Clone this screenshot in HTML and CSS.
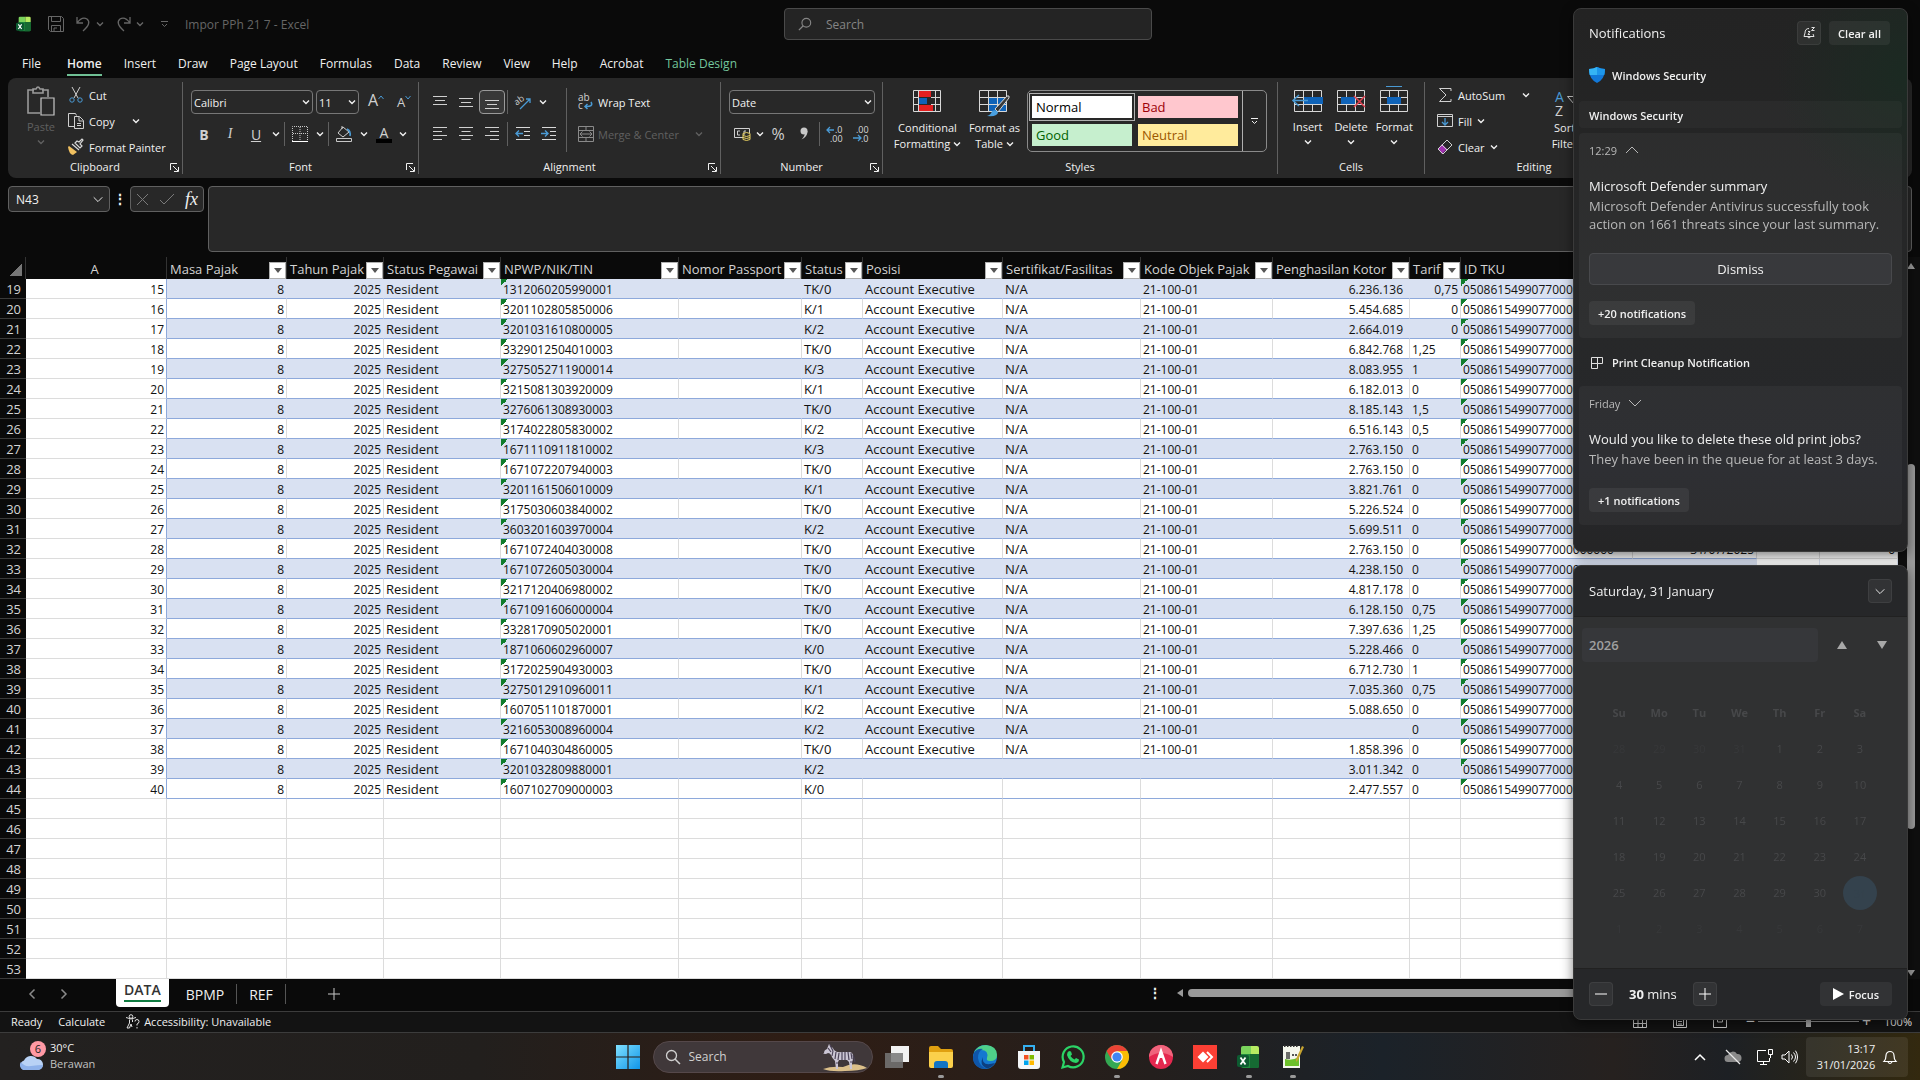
FILE: index.html
```html
<!DOCTYPE html>
<html lang="id">
<head>
  <meta charset="UTF-8">
  <title>Impor PPh 21 7 - Excel</title>
  <link rel="stylesheet" href="styles.css">
</head>
<body>
  <!-- Iconos compartidos -->
  <svg width="0" height="0" class="sprite" aria-hidden="true">
    <symbol id="caret" viewBox="0 0 8 8"><path d="M1 2.5l3 3 3-3" fill="none" stroke="currentColor" stroke-width="1.4"/></symbol>
    <symbol id="chevron" viewBox="0 0 14 14"><path d="M2 5l5 5 5-5" fill="none" stroke="currentColor" stroke-width="1.1"/></symbol>
    <symbol id="launcher" viewBox="0 0 9 9"><path d="M.5 7V.5H7M3 3l5 5M8.5 4v4.5H4" fill="none" stroke="currentColor"/></symbol>
    <symbol id="search" viewBox="0 0 16 16"><circle cx="9.5" cy="6.5" r="5" fill="none" stroke="currentColor" stroke-width="1.3"/><path d="M6 10l-5 5" stroke="currentColor" stroke-width="1.5"/></symbol>
    <symbol id="excel" viewBox="0 0 24 24">
      <path d="M6 1h8v9H4V3q0-2 2-2z" fill="#7ad35c"/><path d="M14 1h6q2 0 2 2v6h-8z" fill="#b7ec62"/>
      <path d="M4 9h18v12q0 2-2 2H6q-2 0-2-2z" fill="#1f8b3d"/><path d="M13 9h9v12q0 2-2 2h-7z" fill="#166a33"/>
      <rect x="0" y="10" width="12" height="12" rx="2" fill="#0d5b31"/><path d="M3.5 12.5l5 7M8.5 12.5l-5 7" stroke="#fff" stroke-width="1.8"/>
    </symbol>
    <symbol id="bars-top" viewBox="0 0 16 16"><path d="M1 2.5h14M3 6.5h10M1 10.5h14" stroke="currentColor"/></symbol>
    <symbol id="bars-mid" viewBox="0 0 16 16"><path d="M1 4.5h14M3 8.5h10M1 12.5h14" stroke="currentColor"/></symbol>
    <symbol id="bars-bot" viewBox="0 0 16 16"><path d="M1 6.5h14M3 10.5h10M1 14.5h14" stroke="currentColor"/></symbol>
    <symbol id="al-left" viewBox="0 0 16 16"><path d="M1 1.5h14M1 5.5h9M1 9.5h14M1 13.5h9" stroke="currentColor"/></symbol>
    <symbol id="al-center" viewBox="0 0 16 16"><path d="M1 1.5h14M3.5 5.5h9M1 9.5h14M3.5 13.5h9" stroke="currentColor"/></symbol>
    <symbol id="al-right" viewBox="0 0 16 16"><path d="M1 1.5h14M6 5.5h9M1 9.5h14M6 13.5h9" stroke="currentColor"/></symbol>
    <symbol id="grid-sheet" viewBox="0 0 28 22"><path d="M.5.5h27v21H.5zM.5 7.5h27M.5 14.5h27M9.5 0v22M18.5 0v22" fill="none" stroke="#d8d8d8"/></symbol>
  </svg>

  <div class="app">
    <header class="titlebar">
      <div class="quick">
        <svg width="16" height="16"><use href="#excel"/></svg>
        <button aria-label="Save"><svg width="16" height="16" viewBox="0 0 16 16" fill="none" stroke="currentColor"><path d="M.5.5h13l2 2v13H2.500l-2-2zM3.500.5v5h9v-5M3.500 15.500v-6h9v6M6 15v-3h3"/></svg></button>
        <button aria-label="Undo"><svg width="16" height="16" viewBox="0 0 16 16" fill="none" stroke="currentColor" stroke-width="1.3"><path d="M1 1v6h6M1 7q5-7 10-4 5 4-4 12"/></svg><svg width="8" height="8"><use href="#caret"/></svg></button>
        <button aria-label="Redo"><svg width="16" height="16" viewBox="0 0 16 16" fill="none" stroke="currentColor" stroke-width="1.3"><path d="M14 1v6H8M14 7Q9 0 4 3q-5 4 4 12"/></svg><svg width="8" height="8"><use href="#caret"/></svg></button>
        <button class="customize" aria-label="Customize"><svg width="9" height="8" viewBox="0 0 9 8" fill="none" stroke="currentColor"><path d="M1 1.500h7M2 4l2.500 2.500L7 4"/></svg></button>
        <span class="doc-name">Impor PPh 21 7 - Excel</span>
      </div>
      <label class="title-search">
        <svg width="14" height="14"><use href="#search"/></svg>
        <input type="text" placeholder="Search" aria-label="Search">
      </label>
    </header>

    <nav class="tabs">
      <a href="#" class="file">File</a>
      <a href="#" class="active">Home</a>
      <a href="#">Insert</a>
      <a href="#">Draw</a>
      <a href="#">Page Layout</a>
      <a href="#">Formulas</a>
      <a href="#">Data</a>
      <a href="#">Review</a>
      <a href="#">View</a>
      <a href="#">Help</a>
      <a href="#">Acrobat</a>
      <a href="#" class="context">Table Design</a>
    </nav>

    <section class="ribbon">
      <div class="group clipboard">
        <div class="group-body">
          <button class="big disabled">
            <svg width="28" height="30" viewBox="0 0 28 30" fill="none" stroke="#9a9a9a" stroke-width="1.6"><path d="M13 27H1V4h6M15 4h6v7M6 7V3h3q2-4 4 0h3v4z"/><path d="M14 12h13v17H14z" stroke="#c8c8c8" stroke-width="1.2"/></svg>
            <span>Paste</span>
            <svg width="8" height="8"><use href="#caret"/></svg>
          </button>
          <div class="stack">
            <button><svg width="16" height="16" viewBox="0 0 16 16" fill="none"><path d="M4 0l6 11M12 0L6 11" stroke="#d0d0d0"/><circle cx="4" cy="13" r="2.2" stroke="#4a9ad4"/><circle cx="12" cy="13" r="2.2" stroke="#4a9ad4"/></svg>Cut</button>
            <button><svg width="16" height="16" viewBox="0 0 16 16" fill="none" stroke="#d0d0d0"><path d="M6 13.500H.5V.5h7l1 2M6.500 3.500h5l4 4v8h-9zM11 4v4h4M9 10.500h4M9 12.500h4"/></svg>Copy<svg class="far" width="8" height="8"><use href="#caret"/></svg></button>
            <button><svg width="16" height="16" viewBox="0 0 16 16"><path d="M1 7l8 6-4 3q-4-1-5-8z" fill="#f0c060"/><path d="M4 5l7 6M7 4l5 5 2-2-2-2 3-4-1-1-3 3-2-1z" fill="none" stroke="#d8d8d8" stroke-width="1.2"/></svg>Format Painter</button>
          </div>
        </div>
        <div class="group-label">Clipboard<svg width="9" height="9"><use href="#launcher"/></svg></div>
      </div>

      <div class="group font">
        <div class="group-body rows">
          <div class="row">
            <span class="combo font-name"><select aria-label="Font"><option>Calibri</option></select><svg width="8" height="8"><use href="#caret"/></svg></span>
            <span class="combo font-size"><select aria-label="Font size"><option>11</option></select><svg width="8" height="8"><use href="#caret"/></svg></span>
            <button class="tool grow" aria-label="Increase font size"><span>A</span><svg width="6" height="5" viewBox="0 0 6 5"><path d="M.5 4L3 1l2.500 3" fill="none" stroke="#4a9ad4"/></svg></button>
            <button class="tool shrink" aria-label="Decrease font size"><span>A</span><svg width="6" height="5" viewBox="0 0 6 5"><path d="M.5 1L3 4l2.500-3" fill="none" stroke="#4a9ad4"/></svg></button>
          </div>
          <div class="row">
            <button class="tool bold">B</button>
            <button class="tool italic">I</button>
            <button class="tool under">U</button>
            <button class="drop" aria-label="Underline style"><svg width="8" height="8"><use href="#caret"/></svg></button>
            <i class="sep"></i>
            <button class="tool" aria-label="Borders"><svg width="16" height="16" viewBox="0 0 16 16" fill="none" stroke="#c8c8c8"><path d="M.5 15V.5h15V15M8 1v14M1 7.500h14" stroke-dasharray="1 1"/><path d="M0 15.500h16" stroke="#fff"/></svg></button>
            <button class="drop" aria-label="Border style"><svg width="8" height="8"><use href="#caret"/></svg></button>
            <i class="sep"></i>
            <button class="tool" aria-label="Fill color"><svg width="16" height="16" viewBox="0 0 16 16" fill="none"><path d="M7 1L2 7l5 4 6-5zM6 3V0" stroke="#d0d0d0"/><path d="M11 3q4 2 3 7" stroke="#4a9ad4" stroke-width="1.6"/><path d="M.5 12.500h15v3H.5z" stroke="#c8c8c8"/></svg></button>
            <button class="drop" aria-label="Fill colors"><svg width="8" height="8"><use href="#caret"/></svg></button>
            <button class="tool color">A</button>
            <button class="drop" aria-label="Font colors"><svg width="8" height="8"><use href="#caret"/></svg></button>
          </div>
        </div>
        <div class="group-label">Font<svg width="9" height="9"><use href="#launcher"/></svg></div>
      </div>

      <div class="group alignment">
        <div class="group-body">
          <div class="rows">
            <div class="row">
              <button class="tool" aria-label="Top align"><svg width="16" height="16"><use href="#bars-top"/></svg></button>
              <button class="tool" aria-label="Middle align"><svg width="16" height="16"><use href="#bars-mid"/></svg></button>
              <button class="tool pressed" aria-label="Bottom align"><svg width="16" height="16"><use href="#bars-bot"/></svg></button>
              <i class="sep"></i>
              <button class="tool" aria-label="Orientation"><svg width="16" height="16" viewBox="0 0 16 16"><text x="0" y="9" font-size="9" fill="#d0d0d0" transform="rotate(-35 5 8)">ab</text><path d="M5 15L15 5M11 5h4v4" fill="none" stroke="#4a9ad4" stroke-width="1.3"/></svg></button>
              <button class="drop" aria-label="Orientation options"><svg width="8" height="8"><use href="#caret"/></svg></button>
            </div>
            <div class="row">
              <button class="tool" aria-label="Align left"><svg width="16" height="16"><use href="#al-left"/></svg></button>
              <button class="tool" aria-label="Center"><svg width="16" height="16"><use href="#al-center"/></svg></button>
              <button class="tool" aria-label="Align right"><svg width="16" height="16"><use href="#al-right"/></svg></button>
              <i class="sep"></i>
              <button class="tool" aria-label="Decrease indent"><svg width="16" height="16" viewBox="0 0 16 16" fill="none"><path d="M1 1.500h14M9 5.500h6M9 9.500h6M1 13.500h14" stroke="#d8d8d8"/><path d="M8 7.500H1M4 4.500l-3 3 3 3" stroke="#4a9ad4" stroke-width="1.4"/></svg></button>
              <button class="tool" aria-label="Increase indent"><svg width="16" height="16" viewBox="0 0 16 16" fill="none"><path d="M1 1.500h14M9 5.500h6M9 9.500h6M1 13.500h14" stroke="#d8d8d8"/><path d="M0 7.500h7M4 4.500l3 3-3 3" stroke="#4a9ad4" stroke-width="1.4"/></svg></button>
            </div>
          </div>
          <i class="sep tall"></i>
          <div class="rows wrap">
            <button><svg width="16" height="16" viewBox="0 0 16 16"><text x="0" y="7" font-size="10" fill="#d0d0d0">ab</text><text x="0" y="15" font-size="10" fill="#d0d0d0">c</text><path d="M13 8q3 5-6 4.500M9.500 10L7 12.500l2.500 2.500" fill="none" stroke="#4a9ad4" stroke-width="1.5"/></svg>Wrap Text</button>
            <button class="disabled"><svg width="16" height="16" viewBox="0 0 16 16" fill="none" stroke="#8a8a8a"><path d="M.5.5h15v15H.5zM.5 4.500h15M.5 11.500h15M8 0v4M8 12v4M2 8h12M4.500 5.500L2 8l2.500 2.500M11.500 5.500L14 8l-2.500 2.500"/></svg>Merge &amp; Center<svg class="far" width="8" height="8"><use href="#caret"/></svg></button>
          </div>
        </div>
        <div class="group-label">Alignment<svg width="9" height="9"><use href="#launcher"/></svg></div>
      </div>

      <div class="group number">
        <div class="group-body rows">
          <div class="row">
            <span class="combo number-format"><select aria-label="Number format"><option>Date</option></select><svg width="8" height="8"><use href="#caret"/></svg></span>
          </div>
          <div class="row">
            <button class="tool" aria-label="Accounting format"><svg width="17" height="16" viewBox="0 0 17 16" fill="none"><path d="M9 11.500H.5v-9h15V7M6 5H3.500v4H6M10 9V5h2" stroke="#d0d0d0"/><path d="M9 7.500q3.500-2 7 0v6q-3.500 2-7 0zM9 9.500q3.500 2 7 0M9 11.500q3.500 2 7 0" stroke="#e8d060"/></svg></button>
            <button class="drop" aria-label="Currencies"><svg width="8" height="8"><use href="#caret"/></svg></button>
            <button class="tool percent">%</button>
            <button class="tool" aria-label="Comma style"><svg width="10" height="14" viewBox="0 0 10 14"><circle cx="5" cy="4" r="3.5" fill="#c8c8c8"/><path d="M8.500 4q0 6-6 8.500Q6 9 6 5z" fill="#c8c8c8"/></svg></button>
            <i class="sep"></i>
            <button class="tool" aria-label="Increase decimal"><svg width="16" height="16" viewBox="0 0 16 16"><path d="M7 4H0M3 1L0 4l3 3" fill="none" stroke="#4a9ad4" stroke-width="1.3"/><text x="8" y="7" font-size="9" fill="#d8d8d8">.0</text><text x="3" y="16" font-size="9" fill="#d8d8d8">.00</text></svg></button>
            <button class="tool" aria-label="Decrease decimal"><svg width="16" height="16" viewBox="0 0 16 16"><path d="M0 12h8M5 9l3 3-3 3" fill="none" stroke="#4a9ad4" stroke-width="1.3"/><text x="3" y="7" font-size="9" fill="#d8d8d8">.00</text><text x="8" y="16" font-size="9" fill="#d8d8d8">.0</text></svg></button>
          </div>
        </div>
        <div class="group-label">Number<svg width="9" height="9"><use href="#launcher"/></svg></div>
      </div>

      <div class="group styles">
        <div class="group-body">
          <button class="big two">
            <svg width="28" height="27" viewBox="0 0 28 27"><path d="M6 0h12v7H6zM6 15h14v7H6z" fill="#e32020"/><path d="M6 8h8v6H6z" fill="#0f63b8"/><path d="M.5.5h27v21H.5zM.5 7.500h5M.5 14.500h5M18 7.500h10M18 14.500h10M5.500 0v22M22.500 0v22" fill="none" stroke="#d8d8d8"/></svg>
            <span>Conditional<br>Formatting <svg width="8" height="8"><use href="#caret"/></svg></span>
          </button>
          <button class="big two">
            <svg width="31" height="27" viewBox="0 0 31 27"><path d="M10 7h18v15H10z" fill="#0f63b8"/><path d="M.5.5h27v21H.5zM.5 7.500h27M.5 14.500h27M9.500 0v22M18.500 0v22" fill="none" stroke="#d8d8d8"/><path d="M16 19L28 6q3-1 2 2L19 22z" fill="#3a3a3a" stroke="#d8d8d8"/><path d="M8 26q4-1 5-5 4-2 6 1 0 5-11 4z" fill="#4aa0e0"/></svg>
            <span>Format as<br>Table <svg width="8" height="8"><use href="#caret"/></svg></span>
          </button>
          <div class="gallery">
            <div class="swatches">
              <button class="normal">Normal</button>
              <button class="bad">Bad</button>
              <button class="good">Good</button>
              <button class="neutral">Neutral</button>
            </div>
            <button class="more" aria-label="More styles"><svg width="9" height="8" viewBox="0 0 9 8" fill="none" stroke="currentColor"><path d="M1 1.500h7M2 4l2.500 2.500L7 4"/></svg></button>
          </div>
        </div>
        <div class="group-label">Styles</div>
      </div>

      <div class="group cells">
        <div class="group-body">
          <button class="big"><svg width="32" height="30" viewBox="0 0 32 30"><g transform="translate(2 4)"><use href="#grid-sheet" width="28" height="22"/></g><path d="M12 11h19v7H12z" fill="#0f63b8"/><path d="M16 14.500H1M7 9l-6 5.500L7 20" fill="none" stroke="#4a9ad4" stroke-width="1.5"/></svg><span>Insert</span><svg width="8" height="8"><use href="#caret"/></svg></button>
          <button class="big"><svg width="32" height="30" viewBox="0 0 32 30"><g transform="translate(2 4)"><use href="#grid-sheet" width="28" height="22"/></g><path d="M6 11h14v7H6z" fill="#0f63b8"/><path d="M19 10l11 11M30 10L19 21" stroke="#e04050" stroke-width="1.5"/></svg><span>Delete</span><svg width="8" height="8"><use href="#caret"/></svg></button>
          <button class="big"><svg width="32" height="30" viewBox="0 0 32 30"><g transform="translate(2 4)"><use href="#grid-sheet" width="28" height="22"/></g><path d="M9 11h14v7H9z" fill="#0f63b8"/><path d="M8 .5h16" stroke="#4a9ad4"/></svg><span>Format</span><svg width="8" height="8"><use href="#caret"/></svg></button>
        </div>
        <div class="group-label">Cells</div>
      </div>

      <div class="group editing">
        <div class="group-body">
          <div class="stack">
            <button><svg width="16" height="16" viewBox="0 0 16 16" fill="none" stroke="#d0d0d0"><path d="M14 4V1.500H2.500L9 8l-6.500 6.500H14V12"/></svg>AutoSum<svg class="far" width="8" height="8"><use href="#caret"/></svg></button>
            <button><svg width="16" height="16" viewBox="0 0 16 16" fill="none"><path d="M.5 1.500h15v12H.5zM.5 3.500h15" stroke="#d0d0d0"/><path d="M8 5v7M5 9l3 3 3-3" stroke="#4a9ad4" stroke-width="1.3"/></svg>Fill<svg width="8" height="8"><use href="#caret"/></svg></button>
            <button><svg width="16" height="16" viewBox="0 0 16 16"><path d="M1 10l4-5 5 5-5 5z" fill="#a030b0"/><path d="M1 10l9-9 5 5-9 9zM5 6l5 5" fill="none" stroke="#d0d0d0"/></svg>Clear<svg width="8" height="8"><use href="#caret"/></svg></button>
          </div>
          <button class="big two">
            <svg width="32" height="27" viewBox="0 0 32 27"><text x="1" y="12" font-size="14" fill="#4a9ad4">A</text><text x="1" y="26" font-size="14" fill="#d0d0d0">Z</text><path d="M13.500 6.500h17l-7 8v7h-3v-7z" fill="none" stroke="#d0d0d0"/></svg>
            <span>Sort &amp;<br>Filter <svg width="8" height="8"><use href="#caret"/></svg></span>
          </button>
        </div>
        <div class="group-label">Editing</div>
      </div>
    </section>

    <section class="formula-row">
      <label class="name-box"><input type="text" value="N43" aria-label="Name box"><svg width="12" height="12"><use href="#chevron"/></svg></label>
      <span class="grip">⋮</span>
      <div class="fx">
        <button aria-label="Cancel"><svg width="13" height="13" viewBox="0 0 13 13"><path d="M1 1l11 11M12 1L1 12" stroke="#7a7a7a"/></svg></button>
        <button aria-label="Enter"><svg width="16" height="13" viewBox="0 0 16 13"><path d="M1 7l4 4L15 1" fill="none" stroke="#7a7a7a"/></svg></button>
        <button class="fn">fx</button>
      </div>
      <textarea class="formula" aria-label="Formula"></textarea>
    </section>

    <main class="sheet">
      <table>
        <colgroup id="cols"></colgroup>
        <thead><tr id="head"></tr></thead>
        <tbody id="grid"></tbody>
      </table>
      <div class="vscroll">
        <span class="arrow up"></span>
        <div class="track"><div class="thumb"></div></div>
        <span class="arrow down"></span>
      </div>
    </main>

    <footer class="sheet-tabs">
      <div class="sheet-nav">
        <button aria-label="Previous sheet"><svg width="8" height="12" viewBox="0 0 8 12"><path d="M6.500 1.500L2 6l4.500 4.500" fill="none" stroke="#8a8a8a" stroke-width="1.5"/></svg></button>
        <button aria-label="Next sheet"><svg width="8" height="12" viewBox="0 0 8 12"><path d="M1.500 1.500L6 6l-4.500 4.500" fill="none" stroke="#8a8a8a" stroke-width="1.5"/></svg></button>
      </div>
      <button class="sheet-tab current"><span>DATA</span></button>
      <button class="sheet-tab">BPMP</button>
      <button class="sheet-tab">REF</button>
      <button class="add-sheet" aria-label="New sheet"><svg width="12" height="12" viewBox="0 0 12 12"><path d="M6 0v12M0 6h12" stroke="#c8c8c8"/></svg></button>
      <div class="hscroll">
        <span class="grip">⋮</span>
        <span class="arrow left"></span>
        <div class="bar"></div>
      </div>
    </footer>

    <div class="status">
      <span>Ready</span>
      <span>Calculate</span>
      <span class="access"><svg width="15" height="15" viewBox="0 0 15 15" fill="none" stroke="#e0e0e0"><circle cx="6" cy="2.5" r="1.8"/><path d="M1 3.500q5 3 10 0M4.500 5.500V9L2 14h2.500L6 10l1 3M7.500 5.500V8M10 7.500q0-2 2-2t2 2-2 2.500v1.500M12 13v1.500"/></svg>Accessibility: Unavailable</span>
      <div class="zoom">
        <svg width="14" height="14" viewBox="0 0 14 14"><path d="M.5.5h13v13H.5zM.5 5h13M.5 9.500h13M5 0v14M9.500 0v14" fill="none" stroke="#d0d0d0"/></svg>
        <svg width="14" height="14" viewBox="0 0 14 14"><path d="M.5.5h13v13H.5zM3.500 2.500h7v9h-7zM5 5h4M5 7.500h4M5 10h4" fill="none" stroke="#d0d0d0"/></svg>
        <svg width="14" height="14" viewBox="0 0 14 14"><path d="M.5.5h13v13H.5zM4.500 0v8h5V0" fill="none" stroke="#d0d0d0"/></svg>
        <button aria-label="Zoom out">−</button>
        <input type="range" min="0" max="100" value="50" aria-label="Zoom">
        <button aria-label="Zoom in">+</button>
        <span>100%</span>
      </div>
    </div>

    <div class="taskbar">
      <button class="weather">
        <span class="cloud">
          <svg width="26" height="18" viewBox="0 0 26 18"><path d="M6 17a5 5 0 0 1 0-9.500A7.500 7.500 0 0 1 19 6a5.500 5.500 0 0 1 1 11z" fill="#b9d2f5"/><path d="M6 17a5 5 0 0 1-3-8q3 5 10 4t12-1a5.500 5.500 0 0 1-5 5z" fill="#8fb2ea"/></svg>
          <b class="badge">6</b>
        </span>
        <span class="temp">30°C<small>Berawan</small></span>
      </button>

      <div class="pinned">
        <button aria-label="Start"><svg width="24" height="24" viewBox="0 0 24 24"><defs><linearGradient id="win" x2="1" y2="1"><stop stop-color="#7fe0ff"/><stop offset="1" stop-color="#1095e8"/></linearGradient></defs><path d="M0 0h11.400v11.400H0zM12.600 0H24v11.400H12.600zM0 12.600h11.400V24H0zM12.600 12.600H24V24H12.600z" fill="url(#win)"/></svg></button>
        <label class="task-search">
          <svg width="16" height="16"><use href="#search"/></svg>
          <input type="text" placeholder="Search" aria-label="Search apps">
          <svg width="44" height="28" viewBox="0 0 44 28">
            <path d="M0 26q8-3 20-2 12-6 24 1-8 3-22 3-14 1-22-2z" fill="#dcc08a"/>
            <path d="M1 10q0-3 3-4l2-5 2 3q2 0 3 3 3 3 7 2h8q4 0 4 4 0 5-1 7v6h-2l-1-7-2-2h-8l-1 2v7h-2l-1-8q-3-3-4-6-1-2-3-2-3 2-5 0z" fill="#cbc6d4"/>
            <path d="M7 2l3 6M5 5l3 4M10 8l-1 5M13 9l-1 7M16 10l-1 7M19 9v8M22 9v8M25 9l1 8M28 10l1 6M13 20h2M27 19h3M30 12l2 7" stroke="#4b4358" stroke-width="1.2"/>
          </svg>
        </label>
        <button aria-label="Task view"><svg width="24" height="24" viewBox="0 0 24 24"><rect x="6" y="1" width="18" height="16" fill="#f2f2f2"/><rect x="0" y="8" width="18" height="15" fill="#777" opacity=".85"/></svg></button>
        <button class="open" aria-label="File Explorer"><svg width="24" height="24" viewBox="0 0 24 24"><path d="M0 3q0-2 2-2h7l3 3h10q2 0 2 2v4H0z" fill="#e0a010"/><path d="M0 7h24v14q0 2-2 2H2q-2 0-2-2z" fill="#fbd04b"/><path d="M5 23v-4q0-3 3-3h8q3 0 3 3v4z" fill="#1274c4"/></svg></button>
        <button aria-label="Edge"><svg width="24" height="24" viewBox="0 0 24 24"><circle cx="12" cy="12" r="12" fill="#1478d0"/><path d="M1 8Q4 0 13 0q11 1 11 10 0 6-7 6-4 0-3-3 2-8-6-8-5 0-7 3z" fill="#4fd08a"/><path d="M1 8q3-5 9-4-5 2-5 9 1 8 9 11Q0 24 0 12z" fill="#0f55a8"/><path d="M10 12q-2 10 12 6-4 6-9 5-7-3-3-11z" fill="#0c3f80"/></svg></button>
        <button aria-label="Store"><svg width="24" height="24" viewBox="0 0 24 24"><path d="M7 6V1h10v5" fill="none" stroke="#35b0f0" stroke-width="2"/><path d="M1 6h22v15q0 3-3 3H4q-3 0-3-3z" fill="#f4f6f8"/><path d="M7 10h4.500v4.500H7z" fill="#f25022"/><path d="M12.500 10H17v4.500h-4.500z" fill="#7fba00"/><path d="M7 15.500h4.500V20H7z" fill="#00a4ef"/><path d="M12.500 15.500H17V20h-4.500z" fill="#ffb900"/></svg></button>
        <button aria-label="WhatsApp"><svg width="24" height="24" viewBox="0 0 24 24"><path d="M1.500 22.500l1.500-5.500a10.500 10.500 0 1 1 4 4z" fill="none" stroke="#2bd366" stroke-width="2.2"/><path d="M8 6l2 .5 1 3-1.500 1.500q1.500 2.500 4 3.500l1.500-1.500 3 1.500q0 3-3 3.500Q8 17 6 10q0-3 2-4z" fill="#2bd366"/></svg></button>
        <button class="open" aria-label="Chrome"><svg width="24" height="24" viewBox="0 0 24 24"><circle cx="12" cy="12" r="12" fill="#34a853"/><path d="M1.600 6A12 12 0 0 1 22.400 6H12l-5.200 9z" fill="#ea4335"/><path d="M22.400 6A12 12 0 0 1 12 24l5.200-9L12 6z" fill="#fbbc05"/><circle cx="12" cy="12" r="5.8" fill="#fff"/><circle cx="12" cy="12" r="4.6" fill="#4285f4"/></svg></button>
        <button aria-label="App A"><svg width="24" height="24" viewBox="0 0 24 24"><circle cx="12" cy="12" r="12" fill="#e5284f"/><path d="M0 12a12 12 0 0 1 24 0q-12-8-24 0z" fill="#f0647c"/><path d="M7.500 19L12 6l4.500 13M12 7v6" fill="none" stroke="#fff" stroke-width="2.4"/></svg></button>
        <button aria-label="AnyDesk"><svg width="24" height="24" viewBox="0 0 24 24"><path d="M0 0h24v24H0z" fill="#fb3f34"/><path d="M10 6.500l5.500 5.500-5.500 5.500L4.500 12z" fill="#fff"/><path d="M14 7l5 5-5 5" fill="none" stroke="#fff" stroke-width="2"/></svg></button>
        <button class="open" aria-label="Excel"><svg width="24" height="24"><use href="#excel"/></svg></button>
        <button class="open" aria-label="Notepad++"><svg width="24" height="24" viewBox="0 0 24 24"><path d="M2 1h17v22H2z" fill="#f4f6ec"/><path d="M4 14q7 2 14-2v9H4z" fill="#6cc02a"/><path d="M3 1h15" stroke="#333" stroke-width="2" stroke-dasharray="1.5 1.5"/><path d="M6 7v7M8 7v7M11 10h2M14 10h2" stroke="#222" stroke-width="1.3"/><path d="M21 1l2 1-6 13-2 2v-3z" fill="#c7a430"/></svg></button>
      </div>

      <div class="tray">
        <button aria-label="Show hidden icons"><svg width="12" height="8" viewBox="0 0 12 8"><path d="M1 7l5-5 5 5" fill="none" stroke="#fff" stroke-width="1.5"/></svg></button>
        <button aria-label="OneDrive"><svg width="18" height="14" viewBox="0 0 18 14"><path d="M4 12a3.500 3.500 0 0 1 0-7 5 5 0 0 1 9-1 4 4 0 0 1 1 8z" fill="#8a8a8a"/><path d="M2 0l14 14" stroke="#e8e8e8" stroke-width="1.3"/></svg></button>
        <button aria-label="Network"><svg width="17" height="16" viewBox="0 0 17 16"><path d="M10 1.500H1.500v11h12V9M4 15.500h7M7.500 12.500v3M12.500.5h4v5h-4zM14.500 5.500v3.500" fill="none" stroke="#fff"/></svg></button>
        <button aria-label="Volume"><svg width="17" height="14" viewBox="0 0 17 14"><path d="M1 5h3l4-4v12L4 9H1zM10.500 4.500q2 2.500 0 5M12.500 2.500q4 4.500 0 9M14.500.7q4 6.300 0 12.600" fill="none" stroke="#fff"/></svg></button>
        <button class="clock">
          <span>13:17<br>31/01/2026</span>
          <svg width="14" height="16" viewBox="0 0 14 16"><path d="M1 12.500q2-2 2-6a4 4 0 0 1 8 0q0 4 2 6zM5 13q2 3 4 0" fill="none" stroke="#fff" stroke-width="1.2"/></svg>
        </button>
      </div>
    </div>
  </div>

  <aside class="flyouts">
    <section class="panel notifications">
      <header>
        <h2>Notifications</h2>
        <button class="chip square" aria-label="Do not disturb"><svg width="12" height="12" viewBox="0 0 12 12" fill="none" stroke="#e0e0e0"><path d="M6 1.500Q2 1.500 2 6L1 9.500h10L10 7M4.500 10q1.500 2 3 0M5 4.500h2l-2 3h2M8.500.5h3L8.500 3.500h3"/></svg></button>
        <button class="chip">Clear all</button>
      </header>
      <div class="source">
        <svg width="16" height="16" viewBox="0 0 16 16"><path d="M8 0q4 2 8 2 0 10-8 14Q0 12 0 2q4 0 8-2z" fill="#1278d8"/><path d="M8 0v8H.7Q0 5 0 2q4 0 8-2z" fill="#35b4f4"/><path d="M8 0v8h7.300Q16 5 16 2q-4 0-8-2z" fill="#1d96ea"/></svg>
        Windows Security
      </div>
      <div class="caption">Windows Security</div>
      <article class="card">
        <button class="when">12:29 <svg width="14" height="14" viewBox="0 0 14 14"><path d="M1 10l6-6 6 6" fill="none" stroke="currentColor"/></svg></button>
        <h3>Microsoft Defender summary</h3>
        <p>Microsoft Defender Antivirus successfully took action on 1661 threats since your last summary.</p>
        <button class="dismiss">Dismiss</button>
        <button class="chip">+20 notifications</button>
      </article>
      <div class="source">
        <svg width="16" height="16" viewBox="0 0 16 16"><path d="M2.500 3.500h11v6h-5v5h-6zM2.500 9.500h6M8.500 3.500v6" fill="none" stroke="#e0e0e0"/></svg>
        Print Cleanup Notification
      </div>
      <article class="card">
        <button class="when">Friday <svg width="14" height="14" viewBox="0 0 14 14"><path d="M1 4l6 6 6-6" fill="none" stroke="currentColor"/></svg></button>
        <h3>Would you like to delete these old print jobs?</h3>
        <p>They have been in the queue for at least 3 days.</p>
        <button class="chip">+1 notifications</button>
      </article>
    </section>

    <section class="panel calendar">
      <header>
        <h2>Saturday, 31 January</h2>
        <button class="chip square" aria-label="Collapse"><svg width="12" height="12"><use href="#chevron"/></svg></button>
      </header>
      <div class="month">
        <div class="year-row">
          <button class="year">2026</button>
          <button aria-label="Previous"><svg width="10" height="8" viewBox="0 0 10 8"><path d="M5 0l5 8H0z" fill="#a8a8a8"/></svg></button>
          <button aria-label="Next"><svg width="10" height="8" viewBox="0 0 10 8"><path d="M5 8l5-8H0z" fill="#a8a8a8"/></svg></button>
        </div>
        <div class="days" id="days"></div>
      </div>
      <div class="focus-row">
        <button class="chip square" aria-label="Less time"><svg width="12" height="12" viewBox="0 0 12 12"><path d="M0 6h12" stroke="#fff"/></svg></button>
        <span><b>30</b> mins</span>
        <button class="chip square" aria-label="More time"><svg width="12" height="12" viewBox="0 0 12 12"><path d="M6 0v12M0 6h12" stroke="#fff"/></svg></button>
        <button class="chip focus"><svg width="11" height="12" viewBox="0 0 11 12"><path d="M0 0l11 6-11 6z" fill="#fff"/></svg>Focus</button>
      </div>
    </section>
  </aside>

  <script>
    const columns = [
      ['A', 141], ['Masa Pajak', 120], ['Tahun Pajak', 97], ['Status Pegawai', 117],
      ['NPWP/NIK/TIN', 178], ['Nomor Passport', 123], ['Status', 61], ['Posisi', 140],
      ['Sertifikat/Fasilitas', 138], ['Kode Objek Pajak', 132], ['Penghasilan Kotor', 137],
      ['Tarif', 51], ['ID TKU', 172], ['', 124], ['', 63], ['', 0]
    ];

    // NPWP, status, penghasilan, tarif, tanggal, kolom terakhir
    const people = [
      ['1312060205990001', 'TK/0', '6.236.136', '0,75'],
      ['3201102805850006', 'K/1', '5.454.685', '0'],
      ['3201031610800005', 'K/2', '2.664.019', '0'],
      ['3329012504010003', 'TK/0', '6.842.768', '1,25'],
      ['3275052711900014', 'K/3', '8.083.955', '1'],
      ['3215081303920009', 'K/1', '6.182.013', '0'],
      ['3276061308930003', 'TK/0', '8.185.143', '1,5'],
      ['3174022805830002', 'K/2', '6.516.143', '0,5'],
      ['1671110911810002', 'K/3', '2.763.150', '0'],
      ['1671072207940003', 'TK/0', '2.763.150', '0'],
      ['3201161506010009', 'K/1', '3.821.761', '0'],
      ['3175030603840002', 'TK/0', '5.226.524', '0'],
      ['3603201603970004', 'K/2', '5.699.511', '0'],
      ['1671072404030008', 'TK/0', '2.763.150', '0', '31/07/2025', '0'],
      ['1671072605030004', 'TK/0', '4.238.150', '0', '31/07/2025', '0'],
      ['3217120406980002', 'TK/0', '4.817.178', '0'],
      ['1671091606000004', 'TK/0', '6.128.150', '0,75'],
      ['3328170905020001', 'TK/0', '7.397.636', '1,25'],
      ['1871060602960007', 'K/0', '5.228.466', '0'],
      ['3172025904930003', 'TK/0', '6.712.730', '1'],
      ['3275012910960011', 'K/1', '7.035.360', '0,75'],
      ['1607051101870001', 'K/2', '5.088.650', '0'],
      ['3216053008960004', 'K/2', '', '0'],
      ['1671040304860005', 'TK/0', '1.858.396', '0'],
      ['3201032809880001', 'K/2', '3.011.342', '0'],
      ['1607102709000003', 'K/0', '2.477.557', '0']
    ];

    const firstRow = 19;
    const lastRow = 53;
    const grid = document.getElementById('grid');

    document.getElementById('cols').innerHTML = '<col class="row-no">' +
      columns.map(c => c[1] ? `<col style="width:${c[1]}px">` : '<col>').join('');

    document.getElementById('head').innerHTML = '<th class="corner"></th>' + columns.map((c, i) => {
      const filter = i > 0 && i < 12 ? `<button aria-label="Filter ${c[0]}"></button>` : '';
      return `<th class="${i === 0 ? 'letter' : ''}"><div><span>${c[0]}</span>${filter}</div></th>`;
    }).join('');

    function renderRow(number) {
      const index = number - firstRow;
      const p = people[index];
      const tr = document.createElement('tr');
      if (!p) {
        tr.innerHTML = `<th>${number}</th>` + '<td></td>'.repeat(columns.length);
        return tr;
      }
      // las dos últimas filas no tienen puesto asignado
      const job = index < 24;
      tr.className = index % 2 === 0 ? 'data band' : 'data';
      tr.innerHTML = `
        <th>${number}</th>
        <td class="num plain">${index + 15}</td>
        <td class="num">8</td>
        <td class="num">2025</td>
        <td>Resident</td>
        <td class="flag">${p[0]}</td>
        <td></td>
        <td>${p[1]}</td>
        <td>${job ? 'Account Executive' : ''}</td>
        <td>${job ? 'N/A' : ''}</td>
        <td class="code">${job ? '21-100-01' : ''}</td>
        <td class="num money">${p[2]}</td>
        <td class="${index < 3 ? 'num' : 'code'}">${p[3]}</td>
        <td class="flag">0508615499077000000000</td>
        <td class="num">${p[4] || ''}</td>
        <td class="plain"></td>
        <td class="plain num">${p[5] || ''}</td>
      `;
      return tr;
    }

    for (let n = firstRow; n <= lastRow; n++) {
      grid.appendChild(renderRow(n));
    }

    // Calendario: enero 2026 empieza en jueves
    const days = document.getElementById('days');
    days.innerHTML = ['Su', 'Mo', 'Tu', 'We', 'Th', 'Fr', 'Sa'].map(d => `<b>${d}</b>`).join('');
    for (let i = 0; i < 42; i++) {
      const day = new Date(2026, 0, i - 3);
      const out = day.getMonth() !== 0;
      const today = !out && day.getDate() === 31;
      days.innerHTML += `<span class="${out ? 'out' : today ? 'today' : ''}">${day.getDate()}</span>`;
    }
  </script>
</body>
</html>
```

FILE: styles.css
```css
* {
  box-sizing: border-box;
}

body {
  margin: 0;
  background-color: #0a0a0a;
  color: #f0f0f0;
  font-family: 'Open Sans', 'Noto Sans', sans-serif;
  font-size: 11px;
}

button, input, select, textarea {
  font: inherit;
  color: inherit;
  background: none;
  border: none;
  padding: 0;
  margin: 0;
  outline: none;
}

button {
  display: inline-flex;
  align-items: center;
  justify-content: center;
  white-space: nowrap;
}

svg {
  flex: none;
  display: block;
  overflow: visible;
}

.sprite {
  position: absolute;
}

.app {
  display: flex;
  flex-direction: column;
  min-height: 100vh;
}

/* Barra de título */
.titlebar {
  display: grid;
  grid-template-columns: 1fr 368px 1fr;
  align-items: center;
  height: 48px;
  padding-left: 16px;
  color: #666;
}

.quick {
  display: flex;
  align-items: center;
  gap: 12px;
}

.quick button {
  gap: 4px;
}

.quick button:nth-of-type(1) {
  margin-left: 4px;
}

.customize {
  margin-left: 4px;
}

.doc-name {
  font-size: 12px;
  margin-left: 4px;
}

.title-search {
  display: flex;
  align-items: center;
  gap: 14px;
  height: 32px;
  padding: 0 13px;
  border: 1px solid #4a4a4a;
  border-radius: 4px;
  background-color: #242424;
  color: #858585;
}

.title-search input {
  flex: 1;
  font-size: 12px;
}

input::placeholder {
  color: inherit;
  opacity: 1;
}

/* Pestañas */
.tabs {
  display: flex;
  gap: 22px;
  height: 30px;
  padding: 4px 22px 0;
  font-size: 12px;
}

.tabs a {
  color: #f0f0f0;
  text-decoration: none;
  height: 24px;
  line-height: 24px;
}

.tabs .file {
  margin-right: 4px;
}

.tabs .active {
  font-weight: 600;
  border-bottom: 2px solid #6fbf94;
}

.tabs .context {
  color: #74c69d;
}

/* Cinta */
.ribbon {
  display: flex;
  height: 100px;
  margin: 0 8px;
  padding: 4px 0;
  background-color: #282828;
  border-radius: 8px;
}

.group {
  display: flex;
  flex-direction: column;
  flex: none;
  border-right: 1px solid #606060;
}

.clipboard { width: 175px; }
.font { width: 236px; }
.alignment { width: 302px; }
.number { width: 162px; }
.styles { width: 395px; }
.cells { width: 147px; }

.editing {
  width: 218px;
  border-right: none;
}

.group-body {
  display: flex;
  flex: none;
  height: 76px;
  padding: 0 8px;
}

.group-label {
  position: relative;
  text-align: center;
  height: 16px;
  line-height: 18px;
}

.group-label svg {
  position: absolute;
  right: 3px;
  bottom: 2px;
}

.big {
  flex-direction: column;
  justify-content: flex-start;
  padding-top: 4px;
  width: 50px;
  text-align: center;
}

.big > span {
  line-height: 16px;
  margin-top: 3px;
}

.big span svg {
  display: inline-block;
}

.big > svg:last-child {
  margin-top: 3px;
}

.cells .big {
  width: 44px;
}

.two {
  padding-top: 8px;
}

.disabled {
  color: #606060;
}

.stack {
  display: flex;
  flex-direction: column;
}

.clipboard .stack {
  margin-left: 2px;
}

.stack button {
  justify-content: flex-start;
  gap: 5px;
  height: 26px;
  flex: none;
}

.far {
  margin-left: 12px;
}

.rows {
  display: flex;
  flex-direction: column;
  gap: 8px;
  padding-top: 8px;
}

.row {
  display: flex;
  align-items: center;
  height: 24px;
}

.combo {
  display: flex;
  flex: none;
  align-items: center;
  height: 24px;
  padding: 0 2px;
  border: 1px solid #777;
  border-radius: 4px;
  margin-right: 3px;
}

.combo select {
  appearance: none;
  flex: 1;
  min-width: 0;
}

.font-name { width: 122px; }
.font-size { width: 43px; }
.number-format { width: 146px; }

.tool {
  flex: none;
  width: 26px;
  height: 24px;
  font-size: 14px;
  color: #d0d0d0;
}

.drop {
  width: 13px;
  height: 24px;
}

.sep {
  flex: none;
  width: 1px;
  height: 24px;
  margin: 0 2px;
  background-color: #606060;
}

.sep.tall {
  height: 64px;
  margin: 6px 11px 0 4px;
}

.grow, .shrink {
  align-items: flex-start;
  width: 28px;
}

.grow { font-size: 16px; line-height: 20px; }
.shrink { font-size: 13px; line-height: 24px; }

.grow svg, .shrink svg {
  margin-top: 5px;
}

.bold { font-weight: 700; }
.italic { font-family: 'Liberation Serif', serif; font-style: italic; }
.under { text-decoration: underline; }

.tool.color {
  border-bottom: 4px solid #000;
  height: 18px;
  width: 16px;
  margin: 0 4px 0 6px;
}

.percent {
  font-size: 16px;
}

.pressed {
  border: 1px solid #9a9a9a;
  border-radius: 4px;
  background-color: #383838;
}

.wrap button {
  justify-content: flex-start;
  gap: 4px;
  height: 24px;
}

.styles .group-body {
  padding: 0 10px;
}

.styles .big {
  width: 70px;
}

.styles .big + .big {
  width: 66px;
}

.gallery {
  display: flex;
  height: 62px;
  margin-top: 8px;
  border: 1px solid #8a8a8a;
  border-radius: 5px;
}

.swatches {
  display: grid;
  grid-template-columns: 100px 100px;
  gap: 6px;
  padding: 5px 4px;
}

.swatches button {
  justify-content: flex-start;
  height: 22px;
  padding-left: 4px;
  font-size: 13px;
}

.normal {
  background-color: #fff;
  color: #000;
  outline: 1px solid #b0b0b0;
  outline-offset: 2px;
}

.bad { background-color: #ffc7ce; color: #9c0006; }
.good { background-color: #c6efce; color: #006100; }
.neutral { background-color: #ffeb9c; color: #9c5700; }

.more {
  width: 24px;
  border-left: 1px solid #b0b0b0;
}

.editing .stack {
  width: 115px;
  padding-left: 4px;
}

.editing .big {
  width: 44px;
}

/* Barra de fórmulas */
.formula-row {
  display: flex;
  align-items: flex-start;
  padding: 8px 8px 5px;
}

.name-box, .fx, .formula {
  border: 1px solid #606060;
  border-radius: 4px;
  background-color: #282828;
}

.name-box {
  display: flex;
  align-items: center;
  width: 102px;
  height: 26px;
  padding: 0 5px 0 7px;
}

.name-box input {
  flex: 1;
  min-width: 0;
  font-size: 12px;
}

.grip {
  width: 20px;
  text-align: center;
  line-height: 26px;
  font-size: 14px;
  font-weight: 700;
}

.fx {
  display: flex;
  justify-content: space-between;
  width: 74px;
  height: 26px;
  padding: 0 5px;
  margin-right: 4px;
}

.fn {
  font-family: 'Liberation Serif', serif;
  font-style: italic;
  font-size: 18px;
}

.formula {
  flex: 1;
  height: 66px;
  resize: none;
}

/* Hoja */
.sheet {
  display: flex;
  flex: 1;
}

table {
  flex: 1;
  width: 100%;
  min-width: 0;
  table-layout: fixed;
  border-collapse: separate;
  border-spacing: 0;
  color: #111;
  background-color: #fff;
}

.row-no {
  width: 26px;
}

thead th {
  height: 22px;
  padding: 0 0 0 3px;
  background-color: #0a0a0a;
  border-right: 1px solid #333;
  color: #d4d4d4;
  font-size: 13px;
  font-weight: 400;
  text-align: left;
  white-space: nowrap;
}

thead th div {
  display: flex;
  align-items: center;
  justify-content: space-between;
  height: 22px;
  line-height: 20px;
  padding-top: 2px;
}

thead th span {
  flex: 1;
  min-width: 0;
}

.letter div {
  padding-right: 6px;
  text-align: center;
}

.corner {
  background-image: linear-gradient(135deg, transparent 50%, #777 50%);
  background-size: 12px 12px;
  background-repeat: no-repeat;
  background-position: 10px 7px;
}

thead button {
  flex: none;
  width: 17px;
  height: 17px;
  margin-top: 2px;
  background-color: #fff;
  border: 1px solid #b0b0b0;
}

thead button::after {
  content: '';
  border: 4px solid transparent;
  border-top: 5px solid #555;
  border-bottom: none;
}

tbody th {
  height: 20px;
  padding: 2px 5px 0 0;
  background-color: #0a0a0a;
  border-bottom: 1px solid #3a3a3a;
  color: #d4d4d4;
  font-size: 13px;
  font-weight: 400;
  line-height: 17px;
  text-align: right;
}

td {
  height: 20px;
  padding: 2px 2px 0;
  border-right: 1px solid #dcdcdc;
  border-bottom: 1px solid #dcdcdc;
  font-size: 13px;
  line-height: 17px;
  white-space: nowrap;
  overflow: hidden;
}

.data td {
  border-bottom-color: #8ea9db;
}

.data .plain {
  background-color: #fff;
  border-bottom-color: #dcdcdc;
}

.data .plain:nth-child(2) {
  border-right-color: #8ea9db;
}

.band td {
  background-color: #d9e1f2;
  border-right-color: #d9e1f2;
}

.num, .flag, .code {
  font-size: 12px;
}

.num {
  text-align: right;
}

.money {
  padding-right: 6px;
}

.flag {
  background-image: linear-gradient(135deg, #107c2c 50%, transparent 50%);
  background-size: 7px 7px;
  background-repeat: no-repeat;
}

.vscroll {
  display: flex;
  flex-direction: column;
  align-items: center;
  width: 22px;
  padding: 6px 0 3px 4px;
  background-color: #0f0f0f;
}

.track {
  flex: 1;
  display: flex;
  flex-direction: column;
  justify-content: center;
}

.thumb {
  width: 8px;
  height: 52%;
  margin-top: 54px;
  border-radius: 4px;
  background-color: #9a9a9a;
}

.arrow {
  border: 4px solid transparent;
}

.up { border-bottom: 6px solid #9a9a9a; border-top: none; }
.down { border-top: 6px solid #9a9a9a; border-bottom: none; }
.left { border-right: 6px solid #9a9a9a; border-left: none; }

/* Hojas */
.sheet-tabs {
  display: flex;
  align-items: flex-start;
  height: 32px;
}

.sheet-nav {
  display: flex;
  gap: 24px;
  width: 116px;
  height: 30px;
  padding-left: 28px;
}

.sheet-tab {
  height: 20px;
  margin-top: 5px;
  padding: 0 12px;
  border-right: 1px solid #555;
  font-size: 14px;
}

.sheet-tab.current {
  height: 28px;
  margin: 0 5px 0 0;
  padding: 0 8px 4px;
  border: none;
  border-radius: 0 0 4px 4px;
  background-color: #fff;
  color: #333;
  font-weight: 600;
}

.sheet-tab.current span {
  border-bottom: 2px solid #107c41;
  line-height: 20px;
}

.add-sheet {
  height: 30px;
  margin-left: 42px;
}

.hscroll {
  display: flex;
  align-items: center;
  width: 775px;
  height: 28px;
  margin-left: auto;
  gap: 5px;
}

.hscroll .grip {
  margin-right: 7px;
}

.hscroll .bar {
  width: 560px;
  height: 8px;
  border-radius: 4px;
  background-color: #9a9a9a;
}

/* Barra de estado */
.status {
  display: flex;
  align-items: center;
  gap: 16px;
  height: 21px;
  padding: 0 8px 2px 11px;
  border-top: 1px solid #3c3c3c;
  background-color: #131313;
}

.access {
  display: flex;
  align-items: center;
  gap: 4px;
  margin-left: 4px;
}

.zoom {
  display: flex;
  align-items: center;
  gap: 3px;
  margin-left: auto;
}

.zoom svg {
  margin-right: 23px;
}

.zoom svg:nth-child(3) {
  margin-right: 16px;
}

.zoom button {
  font-size: 16px;
  line-height: 16px;
}

.zoom span {
  margin-left: 10px;
}

.zoom input {
  appearance: none;
  width: 101px;
  height: 1px;
  background-color: #9a9a9a;
}

.zoom input::-webkit-slider-thumb {
  appearance: none;
  width: 5px;
  height: 12px;
  background-color: #b0b0b0;
}

/* Barra de tareas */
.taskbar {
  display: grid;
  grid-template-columns: 1fr auto 1fr;
  align-items: center;
  height: 48px;
  padding: 0 12px;
  border-top: 1px solid #3c3c3c;
  background: linear-gradient(90deg, #232120 0%, #221f1d 25%, #2f1d14 42%, #241f1d 60%, #1b2229 72%, #26211f 84%, #1d2024 90%, #33290f 100%);
}

.weather {
  justify-self: start;
  gap: 6px;
  margin: 0 0 2px 6px;
}

.cloud {
  position: relative;
  padding-top: 12px;
}

.badge {
  position: absolute;
  top: 0;
  right: -2px;
  width: 16px;
  height: 16px;
  border-radius: 50%;
  background-color: #ff99a4;
  color: #222;
  font-weight: 400;
  line-height: 16px;
}

.temp {
  text-align: left;
  line-height: 16px;
}

.temp small {
  display: block;
  color: #c0c0c0;
  font-size: 11px;
}

.pinned {
  display: flex;
  align-items: center;
}

.pinned button {
  position: relative;
  width: 44px;
  height: 46px;
}

.open::after {
  content: '';
  position: absolute;
  bottom: 2px;
  left: 19px;
  width: 6px;
  height: 3px;
  border-radius: 2px;
  background-color: #9a9a9a;
}

.task-search {
  display: flex;
  align-items: center;
  gap: 8px;
  width: 220px;
  height: 32px;
  margin: 0 2px 0 3px;
  padding: 0 5px 0 11px;
  border: 1px solid #55484a;
  border-radius: 16px;
  background-color: #40383a;
  color: #d0d0d0;
}

.task-search input {
  flex: 1;
  min-width: 0;
  font-size: 12px;
}

.task-search svg:first-child {
  transform: scaleX(-1);
}

.tray {
  display: flex;
  align-items: center;
  justify-self: end;
  gap: 8px;
}

.tray button:nth-child(2) {
  margin: 0 6px 0 10px;
}

.clock {
  gap: 8px;
  height: 40px;
  width: 102px;
  border-radius: 4px;
  background-color: rgba(255, 255, 255, 0.08);
  line-height: 16px;
  text-align: right;
}

/* Paneles flotantes */
.flyouts {
  position: fixed;
  top: 8px;
  right: 12px;
  bottom: 60px;
  display: flex;
  flex-direction: column;
  justify-content: space-between;
  width: 335px;
}

.panel {
  border: 1px solid #3a3a3a;
  border-radius: 8px;
  background-color: #262729;
  box-shadow: 0 4px 12px rgba(0, 0, 0, 0.5);
  overflow: hidden;
}

.notifications {
  padding: 0 5px 26px;
  background: radial-gradient(circle at 100% 12%, #1b2a22 0, transparent 130px), linear-gradient(180deg, #232323 0%, #272829 60%, #26272b 85%, #252526 100%);
}

.panel header {
  display: flex;
  align-items: center;
  gap: 8px;
  height: 50px;
}

.notifications header {
  height: 48px;
  padding: 0 12px 0 10px;
}

.panel h2 {
  flex: 1;
  margin: 0;
  font-size: 13px;
  font-weight: 500;
}

.chip {
  height: 24px;
  padding: 0 9px;
  border-radius: 4px;
  background-color: rgba(255, 255, 255, 0.06);
  font-weight: 600;
}

.chip.square {
  width: 24px;
  padding: 0;
  border: 1px solid rgba(255, 255, 255, 0.06);
}

.source {
  display: flex;
  align-items: center;
  gap: 7px;
  height: 36px;
  padding: 0 10px;
  font-weight: 600;
}

.caption {
  height: 27px;
  margin: 8px 0 5px;
  padding: 0 10px;
  border-radius: 4px;
  background-color: rgba(255, 255, 255, 0.03);
  font-weight: 600;
  line-height: 30px;
}

.card {
  padding: 9px 10px 13px;
  border-radius: 4px;
  background-color: rgba(255, 255, 255, 0.04);
}

.card + .source {
  margin: 6px 0;
}

.when {
  gap: 8px;
  color: #b8b8b8;
  height: 16px;
}

.card h3 {
  margin: 19px 0 0;
  font-size: 13px;
  font-weight: 500;
  line-height: 18px;
}

.card p {
  margin: 2px 0 20px;
  color: #b8b8b8;
  font-size: 13px;
  line-height: 18px;
}

.dismiss {
  display: flex;
  width: 100%;
  height: 32px;
  margin-bottom: 16px;
  border: 1px solid #48494c;
  border-radius: 4px;
  background-color: #38393c;
  font-size: 13px;
}

.calendar header {
  padding: 0 15px;
}

.month {
  padding: 11px 5px 0 8px;
  border-top: 1px solid #212121;
  border-bottom: 1px solid #212121;
  background-color: #303132;
}

.year-row {
  display: flex;
}

.year-row button {
  width: 40px;
}

.year-row .year {
  justify-content: flex-start;
  width: 237px;
  height: 34px;
  margin-right: 4px;
  padding-left: 7px;
  border-radius: 4px;
  background-color: #36373a;
  color: #a0a0a0;
  font-size: 13px;
  font-weight: 600;
}

.days {
  display: grid;
  grid-template-columns: repeat(7, 1fr);
  grid-auto-rows: 36px;
  padding: 33px 22px 21px 17px;
  color: #47484a;
  text-align: center;
  line-height: 36px;
}

.days .out {
  color: #37383a;
}

.days .today {
  width: 34px;
  height: 34px;
  margin: 1px auto;
  border-radius: 50%;
  background-color: #34424d;
  color: #34424d;
}

.focus-row {
  display: flex;
  align-items: center;
  gap: 16px;
  height: 50px;
  padding: 0 15px;
  font-size: 13px;
}

.focus {
  gap: 5px;
  width: 72px;
  margin-left: auto;
  font-size: 11px;
}
```
